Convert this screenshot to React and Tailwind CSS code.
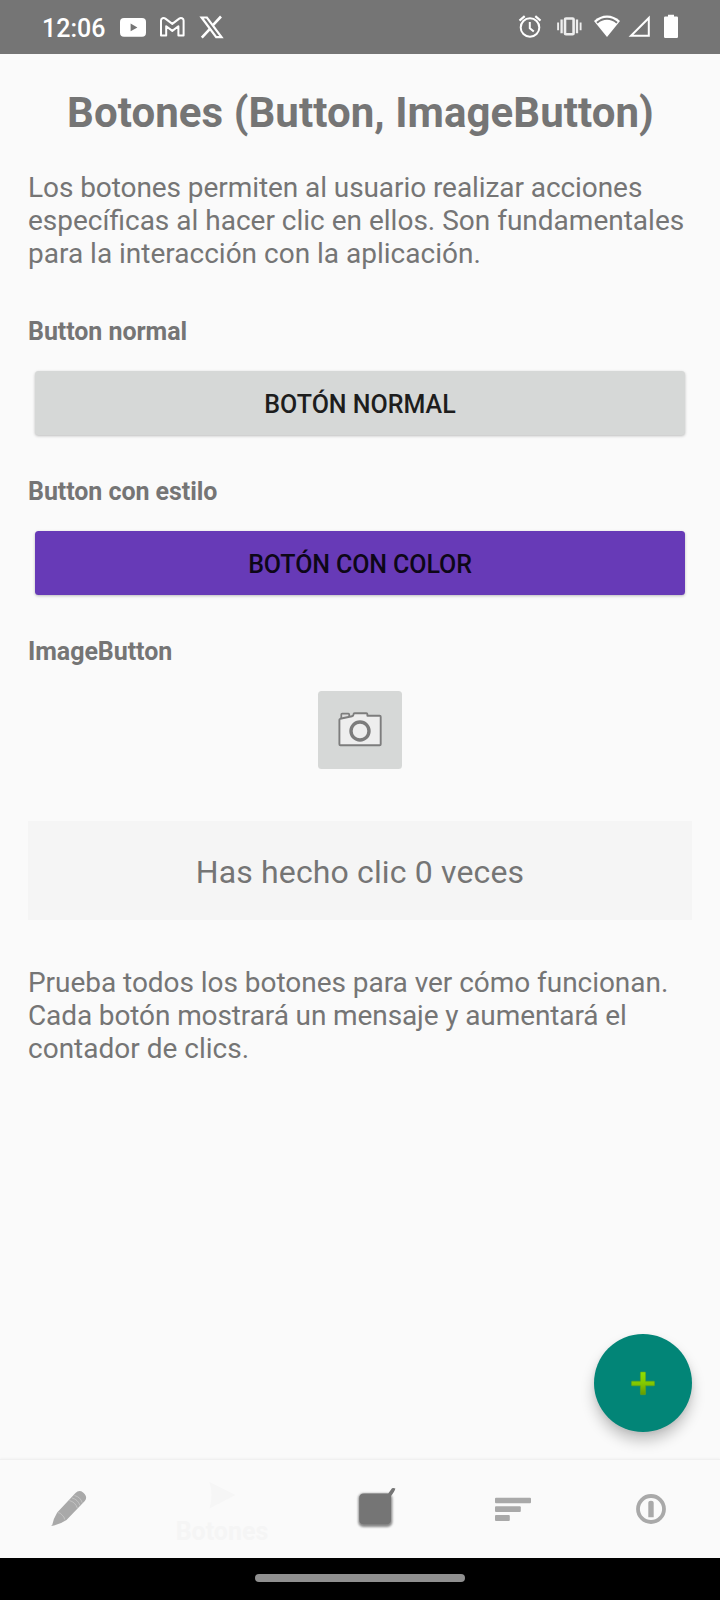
import React, { useState } from "react";

function StatusBar() {
  return (
    <header className="flex h-[54px] shrink-0 items-center justify-between bg-[#757575] pl-[42px] pr-[40px] text-white">
      <div className="flex items-center">
        <span className="mt-[3px] w-[76px] text-[25px] leading-[30px] font-medium">12:06</span>
        <svg className="h-[54px] w-[30px]" viewBox="118 0 30 54">
          <rect x="120" y="18" width="26" height="18.8" rx="4" fill="#fff" />
          <path d="M130.6 23.6v7.6l6.8-3.8z" fill="#757575" />
        </svg>
        <svg className="ml-[10px] h-[54px] w-[28px]" viewBox="158 0 28 54" fill="none" stroke="#fff" strokeWidth="2" strokeLinejoin="round">
          <path d="M161 35.5V20.6c0-2.3 2.6-3.3 4.4-2l6.900 5.300 6.900-5.300c1.800-1.300 4.400-.3 4.400 2v14.900h-5.200v-9.300l-6.100 4.700-6.100-4.700v9.300z" />
        </svg>
        <svg className="ml-[12px] h-[54px] w-[28px]" viewBox="198 0 28 54" fill="none" stroke="#fff">
          <path d="M201.600 17.500h5.300l14.600 19.600h-5.300z" strokeWidth="2.200" />
          <path d="M221 16.500l-8 8.700M210.400 28.400l-8.600 9.300" strokeWidth="2.600" />
        </svg>
      </div>
      <svg className="h-[54px] w-[164px]" viewBox="516 0 164 54" fill="none" stroke="#fff">
        <circle cx="530" cy="27.500" r="9.300" strokeWidth="2" />
        <path d="M529.800 22v6.200l4 3.400" strokeWidth="2" />
        <path d="M519.500 20.600l5.200-4.400M540.500 20.600l-5.200-4.400" strokeWidth="2.200" />
        <g opacity=".88">
          <rect x="565" y="18.500" width="8.600" height="15.800" rx="1" strokeWidth="2.600" />
          <path d="M561.600 19.500v13.800M577 19.500v13.800" strokeWidth="2.300" />
          <path d="M558.100 22.500v7.800M580.600 22.500v7.800" strokeWidth="1.900" />
        </g>
        <path d="M594 21c7.500-7.400 18.500-7.400 26 0L607 37z" fill="#fff" stroke="none" />
        <path d="M597 22.700c6-5.300 14-5.300 20 0" strokeWidth="2" stroke="#757575" />
        <path d="M631 35.800h17.800V18z" strokeWidth="2" />
        <path d="M668 16.500v-1.700h6v1.700h2.800q1.200 0 1.200 1.200v19q0 1.300-1.200 1.300h-11.600q-1.200 0-1.200-1.300v-19q0-1.200 1.200-1.200z" fill="#fff" stroke="none" />
      </svg>
    </header>
  );
}

function SectionLabel({ children }) {
  return <h2 className="text-[25px] leading-[29px] font-bold tracking-[-0.06px]">{children}</h2>;
}

function CameraIcon() {
  return (
    <svg className="h-[56px] w-[56px]" viewBox="332 702 56 56" strokeLinejoin="round">
      <path d="M341.300 719v-4.500q0-.8.800-.8h6.300q.8 0 .8.800v2" fill="#ddd" stroke="#7d7d7d" strokeWidth="1.700" />
      <path d="M339.400 719.800q0-.8.800-1l11.800-2.600q1.500-.3 1.500-1.800 0-1.200 1.200-1.200h11.500q1.200 0 1.200 1.200v1.400h12.300q1 0 1 1v27.400q0 1-1 1h-39.300q-1 0-1-1z" fill="#eee" stroke="#7d7d7d" strokeWidth="1.900" />
      <circle cx="360" cy="731" r="9" fill="#eee" stroke="#7c7c7c" strokeWidth="3.400" />
    </svg>
  );
}

function PencilIcon() {
  return (
    <svg className="h-[42px] w-[42px]" viewBox="48 1488 42 42">
      <path d="M51 1526l1.200-1q1.300-6.500 5-12.500L75.500 1493q3.500-3.500 7.600-.6l1.500 1.500q3 3.400.2 7.200L66.500 1520q-5.500 3.800-12.500 5.500z" fill="#a9a9a9" />
      <g fill="none" stroke="#c4c4c4" strokeWidth=".9">
        <path d="M57.500 1512.500q3.500.2 4.500 2.700 2.500 1.300 2.600 4.300" />
        <path d="M69.300 1500.500q6 1.500 8 7.500M72 1498q6 1.500 8 7.500M74.500 1495.500q6 1.500 7.700 7.200" />
      </g>
    </svg>
  );
}

function BottomNav() {
  return (
    <nav className="flex h-[99px] shrink-0 border-t border-[#f0f0f0] bg-[#fafafa] shadow-[0_-1px_2px_rgba(0,0,0,0.03)]">
      <button className="flex w-[138px] items-center justify-center">
        <PencilIcon />
      </button>
      <button className="flex w-[168px] flex-col items-center pt-[14px] text-[#f5f5f5]">
        <svg className="h-[42px] w-[42px]" viewBox="201 1474 42 42">
          <path d="M209.500 1482l26 13-26 13.500q4-13 0-26.500z" fill="#f6f6f6" />
        </svg>
        <span className="mt-px text-[25px] leading-[29px] font-bold">Botones</span>
      </button>
      <button className="flex w-[138px] items-center justify-center">
        <svg className="h-[42px] w-[42px]" viewBox="354 1488 42 42">
          <defs>
            <filter id="box-glow" x="-20%" y="-20%" width="140%" height="140%">
              <feGaussianBlur stdDeviation="1.300" />
            </filter>
            <filter id="box-soft" x="-10%" y="-10%" width="120%" height="120%">
              <feGaussianBlur stdDeviation="0.500" />
            </filter>
          </defs>
          <rect x="358.300" y="1493.500" width="34" height="33.500" rx="5" fill="#888" filter="url(#box-glow)" />
          <path
            d="M364 1493.500h24.200l3.800-5.200q1.500-.8 3.400.2-.6 2.700-4.400 7.500v23.500q0 4.800-4.800 4.800H364q-4.800 0-4.800-4.800v-21.200q0-4.800 4.800-4.800z"
            fill="#757575"
            filter="url(#box-soft)"
          />
        </svg>
      </button>
      <button className="flex w-[138px] items-center justify-center">
        <svg className="h-[42px] w-[42px]" viewBox="492 1488 42 42" fill="#a9a9a9">
          <rect x="495" y="1497.700" width="36" height="5.600" rx="1" />
          <rect x="495" y="1506.300" width="25.800" height="5.600" rx="1" />
          <rect x="495" y="1515" width="14.800" height="5.900" rx="1" />
        </svg>
      </button>
      <button className="flex w-[138px] items-center justify-center">
        <svg className="h-[42px] w-[42px]" viewBox="630 1488 42 42">
          <circle cx="651" cy="1509" r="13" fill="none" stroke="#a9a9a9" strokeWidth="3.800" />
          <path d="M648.300 1503q0-2.300 2.700-2.300t2.700 2.300v14.200h-5.400z" fill="#a9a9a9" />
        </svg>
      </button>
    </nav>
  );
}

export default function App() {
  const [clicks, setClicks] = useState(0);
  const click = () => setClicks(clicks + 1);

  return (
    <div className="relative flex h-[1600px] w-[720px] flex-col overflow-hidden bg-[#fafafa] font-[Roboto,sans-serif] text-[#757575]">
      <StatusBar />
      <main className="flex grow flex-col px-[28px] pt-[34px]">
        <h1 className="pl-px text-center text-[42px] leading-[49px] font-bold tracking-[0.060px] whitespace-nowrap">Botones (Button, ImageButton)</h1>
        <p className="mt-[34px] text-[28px] leading-[33px] whitespace-nowrap">
          <span className="tracking-[-0.073px]">Los botones permiten al usuario realizar acciones</span>
          <br />
          específicas al hacer clic en ellos. Son fundamentales
          <br />
          para la interacción con la aplicación.
        </p>
        <div className="mt-[47px]">
          <SectionLabel>Button normal</SectionLabel>
        </div>
        <button
          onClick={click}
          className="mx-[7px] mt-[25px] h-[64px] rounded-[3.500px] bg-[#d6d8d7] pt-[3px] text-[25px] leading-[29px] font-medium text-[#1d1d1d] shadow-[0_1px_3px_rgba(0,0,0,0.250)]"
        >
          BOTÓN NORMAL
        </button>
        <div className="mt-[42px]">
          <SectionLabel>Button con estilo</SectionLabel>
        </div>
        <button
          onClick={click}
          className="mx-[7px] mt-[25px] h-[64px] rounded-[3.500px] bg-[#673ab7] pt-[3px] text-[25px] leading-[29px] font-medium tracking-[-0.100px] text-[#0d0717] shadow-[0_1px_3px_rgba(0,0,0,0.250)]"
        >
          BOTÓN CON COLOR
        </button>
        <div className="mt-[42px]">
          <SectionLabel>ImageButton</SectionLabel>
        </div>
        <button onClick={click} className="mt-[25px] flex h-[78px] w-[84px] items-center justify-center self-center rounded-[3.500px] bg-[#d6d8d7]">
          <CameraIcon />
        </button>
        <div className="mt-[52px] flex h-[99px] items-center justify-center bg-[#f5f5f5] pt-[4px] text-[32px] leading-[37px] tracking-[0.140px]">
          Has hecho clic {clicks} veces
        </div>
        <p className="mt-[46px] text-[28px] leading-[33px] whitespace-nowrap">
          <span className="tracking-[-0.040px]">Prueba todos los botones para ver cómo funcionan.</span>
          <br />
          <span className="tracking-[-0.110px]">Cada botón mostrará un mensaje y aumentará el</span>
          <br />
          contador de clics.
        </p>
      </main>
      <BottomNav />
      <footer className="flex h-[42px] shrink-0 justify-center bg-black pt-[16px]">
        <div className="h-[8px] w-[210px] rounded-full bg-[#8f8f8f]" />
      </footer>
      <button
        onClick={click}
        className="absolute right-[28px] bottom-[168px] flex h-[98px] w-[98px] items-center justify-center rounded-full bg-[#028577] shadow-[0_9px_14px_rgba(0,0,0,0.220),0_2px_5px_rgba(0,0,0,0.070)]"
      >
        <svg className="h-[42px] w-[42px]" viewBox="622 1362 42 42">
          <defs>
            <linearGradient id="plus-fill" x1="0" y1="0" x2="0" y2="1">
              <stop offset="0" stopColor="#8fe000" />
              <stop offset="0.500" stopColor="#83c800" />
              <stop offset="1" stopColor="#669a00" />
            </linearGradient>
          </defs>
          <path
            d="M641 1372h4q.6 0 .6.6v8.600h8.300q.6 0 .6.6v3.400q0 .6-.6.6h-8.300v8.300q0 .6-.6.6h-4q-.6 0-.6-.6v-8.300h-8.300q-.6 0-.6-.6v-3.400q0-.6.6-.6h8.300v-8.600q0-.6.6-.6z"
            fill="url(#plus-fill)"
            stroke="#62a51c"
            strokeWidth=".6"
          />
        </svg>
      </button>
    </div>
  );
}
